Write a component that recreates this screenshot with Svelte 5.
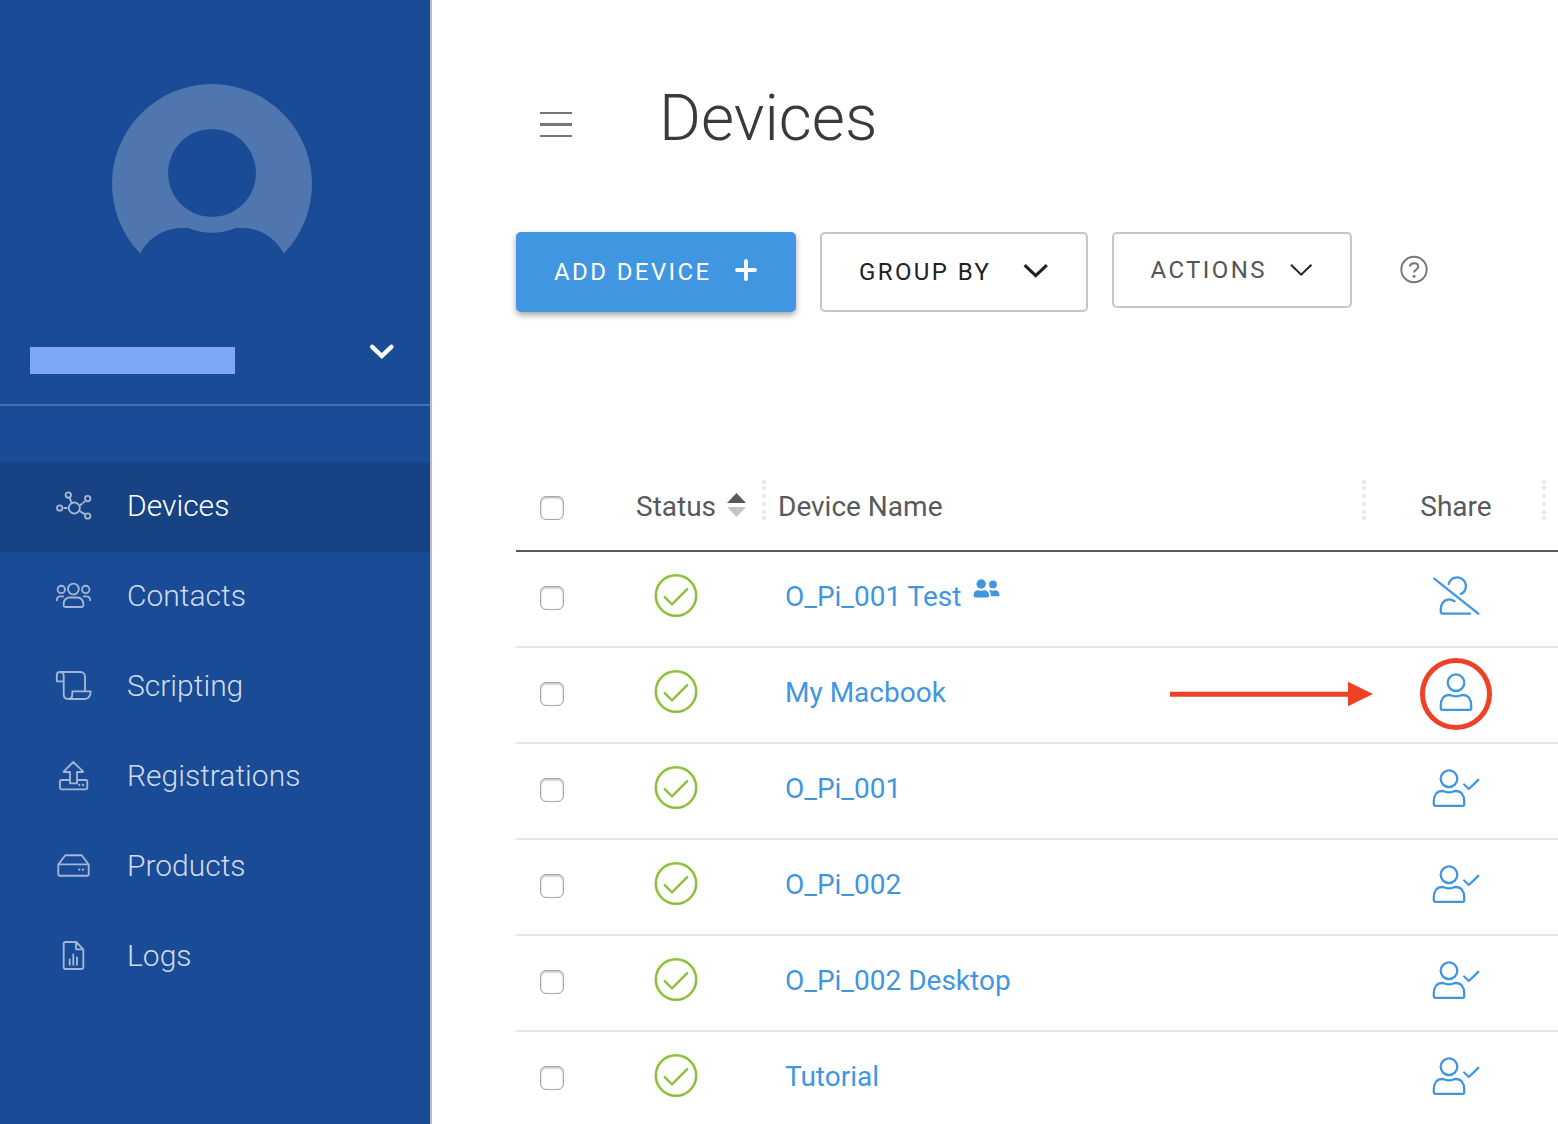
<script>
  const nav = [
    { id: 'devices', label: 'Devices', active: true },
    { id: 'contacts', label: 'Contacts' },
    { id: 'scripting', label: 'Scripting' },
    { id: 'registrations', label: 'Registrations' },
    { id: 'products', label: 'Products' },
    { id: 'logs', label: 'Logs' },
  ];
  const devices = [
    { name: 'O_Pi_001 Test', share: 'off', group: true },
    { name: 'My Macbook', share: 'none', marked: true },
    { name: 'O_Pi_001', share: 'shared' },
    { name: 'O_Pi_002', share: 'shared' },
    { name: 'O_Pi_002 Desktop', share: 'shared' },
    { name: 'Tutorial', share: 'shared' },
  ];
</script>

<div class="app">
  <aside class="sidebar">
    <div class="profile">
      <svg class="avatar" width="200" height="170" viewBox="0 0 200 170">
        <path fill-rule="evenodd" d="M28.200 169.600A100 100 0 1 1 171.800 169.600C163 153 147 144 130 144L124 144Q100 153.500 76 144L70 144C53 144 37 153 28.200 169.600ZM100 45a44 44 0 1 0 0 88a44 44 0 1 0 0-88Z" />
      </svg>
      <div class="account">
        <div class="masked"></div>
        <svg width="26" height="18" viewBox="0 0 26 18"><path class="bold-chevron" d="M4.200 4.800 13.800 14 23.400 4.800" /></svg>
      </div>
    </div>
    <nav>
      {#each nav as item}
        <div class="nav-item" class:active={item.active}>
          <svg class="nav-icon" width="36" height="36" viewBox="0 0 36 36">
            {#if item.id === 'devices'}
              <circle cx="12.300" cy="7" r="2.700" /><circle cx="31.700" cy="10.600" r="2.700" />
              <circle cx="3.700" cy="20" r="2.700" /><circle cx="31.700" cy="28" r="2.700" />
              <circle cx="18.300" cy="20" r="5.500" />
              <path d="M13.500 9.700 15.700 14.800M8.300 20h2.400M24.500 17l1.200-1M27.200 14.700l1-.8M23.200 22.700l5.900 3.700" />
            {:else if item.id === 'contacts'}
              <circle cx="5.300" cy="11.400" r="3.700" /><circle cx="17.400" cy="11" r="5.400" /><circle cx="29.700" cy="11.400" r="3.700" />
              <path d="M7.700 27.500V25.500a6 6 0 0 1 6-6h7.600a6 6 0 0 1 6 6v2a1.500 1.500 0 0 1-1.500 1.500H9.200a1.500 1.500 0 0 1-1.500-1.500ZM.8 22.300c0-2.600 1.500-3.900 3.800-3.900h2.600M34.200 22.300c0-2.600-1.500-3.900-3.800-3.900h-2.600" />
            {:else if item.id === 'scripting'}
              <path d="M4 4h20.500C27 4 29 6 29 8.500V23M4 4C2 4 .8 5.500.8 7.300v6h6.900M4 4c2.400 0 3.700 1.500 3.700 4v18c0 3 1.800 5 4.600 5h16.200c3.800 0 6-2.500 6.200-7.700H16.300V26c0 3-1.500 5-4 5" />
            {:else if item.id === 'registrations'}
              <path d="M17.300 4 27 13.300q.5.700-.4.700H21v11.300h-7V14H8.200q-1 0-.4-.7ZM14 22H5.500A1.500 1.500 0 0 0 4 23.500v6.300a1.500 1.500 0 0 0 1.500 1.500h24.300a1.500 1.500 0 0 0 1.500-1.500v-6.300a1.500 1.500 0 0 0-1.500-1.500H21" />
              <path class="dots" d="M23.300 27h.01M27 27h.01" />
            {:else if item.id === 'products'}
              <path d="M2.300 16.300h30.400v9.900a1.500 1.500 0 0 1-1.500 1.500H3.800a1.500 1.500 0 0 1-1.500-1.500ZM2.500 16.200 8.700 8q.6-.8 1.500-.8h14.600q.9 0 1.500.8l6.200 8.200" />
              <path class="dots" d="M23.300 21.700h.01M27 21.700h.01" />
            {:else}
              <path d="M20.300 4H9.200a1.500 1.500 0 0 0-1.500 1.500v24A1.500 1.500 0 0 0 9.200 31h16.600a1.500 1.500 0 0 0 1.500-1.500V11.300ZM20 4v7.300h7.300M13.700 21.300v5.400M17.300 16.300v10.400M21 19.300v7.400" />
            {/if}
          </svg>
          <span>{item.label}</span>
        </div>
      {/each}
    </nav>
  </aside>

  <main>
    <header>
      <div class="burger"><i></i><i></i><i></i></div>
      <h1>Devices</h1>
    </header>

    <div class="toolbar">
      <button class="primary">
        <span>ADD DEVICE</span>
        <svg width="22" height="22" viewBox="0 0 22 22"><path d="M11 2v18M2 11h18" /></svg>
      </button>
      <button class="group">
        <span>GROUP BY</span>
        <svg width="26" height="18" viewBox="0 0 26 18"><path d="M1.600 3.200 12.700 13.600 23.800 3.200" /></svg>
      </button>
      <button class="actions">
        <span>ACTIONS</span>
        <svg width="22" height="14" viewBox="0 0 22 14"><path d="M1 1.700 11.200 11.700 21.400 1.700" /></svg>
      </button>
      <svg class="help" width="28" height="28" viewBox="0 0 28 28">
        <circle cx="14" cy="13.500" r="12.700" />
        <path d="M9.700 10.500C10.300 8.100 12 7.200 14 7.200c2.500 0 4.300 1.300 4.300 3.400 0 3-4.300 3-4.300 6" />
        <circle class="point" cx="14" cy="20.300" r="1.500" />
      </svg>
    </div>

    <section class="table">
      <div class="row head">
        <div class="pick"><span class="box"></span></div>
        <div class="status">
          <span>Status</span>
          <svg width="19" height="24" viewBox="0 0 19 24"><path fill="#58595b" d="M0 10 9.500 0 19 10Z" /><path fill="#c4c4c4" d="M0 14h19L9.500 24Z" /></svg>
        </div>
        <div class="name">Device Name</div>
        <div class="share">Share</div>
        <div class="rest"></div>
      </div>
      {#each devices as device}
        <div class="row">
          <div class="pick"><span class="box"></span></div>
          <div class="status">
            <svg width="44" height="44" viewBox="0 0 44 44"><circle cx="22" cy="21.500" r="20.200" /><path d="M10.800 23.200 18 30.300 33.200 15.200" /></svg>
          </div>
          <div class="name">
            <span>{device.name}</span>
            {#if device.group}
              <svg class="people" width="27" height="20" viewBox="0 0 27 20">
                <circle cx="8.200" cy="5" r="4.700" /><circle cx="20" cy="5.400" r="3.900" />
                <path d="M.5 16.500C.5 13.300 2.300 11.300 5 11.300q3 1 6 0c3 0 5.200 2 5.200 5.200q0 2-1.700 2h-12.300q-1.700 0-1.700-2Z" />
                <path d="M16 11.600q1-.5 2-.3 2 .9 4 0c2.500 0 4.500 2 4.500 4.500 0 1-.5 1.500-1.400 1.500h-7.400q.5-3.700-1.700-5.700Z" />
              </svg>
            {/if}
            {#if device.marked}
              <svg class="arrow" width="204" height="26" viewBox="0 0 204 26"><path d="M0 9.700h178V-.3l25 12.300-25 12.300v-9.500H0Z" /></svg>
            {/if}
          </div>
          <div class="share">
            <svg width="48" height="40" viewBox="0 0 48 40">
              {#if device.share === 'off'}
                <path d="M2.200 2.700 46.300 37.700M16.700 8.100A8.700 8.700 0 1 1 29 17.900M22.500 25.200C20.500 24 18.500 23.300 16.500 23.500 12 23.900 8.800 27.800 8.800 33v2.800q0 1.900 1.900 1.900H37.900" />
              {:else}
                <g class:centered={device.share === 'none'}>
                  <circle cx="17" cy="10.700" r="8.300" />
                  <path d="M1.800 33.500C1.800 27 5 23 10.300 23q1.200 0 2.300.5 4.400 1.800 8.800 0 1.100-.5 2.300-.5C29 23 32.200 27 32.200 33.500v2.800q0 1.500-1.500 1.500H3.300q-1.500 0-1.500-1.500Z" />
                </g>
                {#if device.share === 'shared'}<path d="M32.200 16.500 36.800 21 46.300 11.800" />{/if}
              {/if}
            </svg>
            {#if device.marked}<span class="ring"></span>{/if}
          </div>
          <div class="rest"></div>
        </div>
      {/each}
    </section>
  </main>
</div>

<style>
  :global(body) { margin: 0; background: #fff; overflow: hidden; }
  .app { display: flex; width: 1558px; height: 1124px; overflow: hidden; font-family: Roboto, sans-serif; }
  svg { display: block; flex: none; overflow: visible; }
  .sidebar { box-sizing: border-box; width: 432px; flex: none; background: #1a4b96; border-right: 2px solid #bdbdc1; }
  .profile { box-sizing: border-box; height: 406px; padding-top: 84px; border-bottom: 2px solid #476fab; }
  .avatar { margin-left: 112px; fill: #5076af; }
  .account { display: flex; justify-content: space-between; padding: 88px 36px 0 30px; }
  .masked { width: 205px; height: 27px; margin-top: 5px; background: #7ea7f8; }
  .bold-chevron { fill: none; stroke: #fff; stroke-width: 4.400; stroke-linecap: round; }
  nav { padding-top: 56px; }
  .nav-item { box-sizing: border-box; display: flex; align-items: center; height: 90px; padding: 0 0 2px 56px; gap: 35px; color: #d1dbea; font-size: 30px; font-weight: 300; }
  .nav-item span { margin-top: -2px; }
  .nav-item.active { background: #174384; color: #fff; }
  .nav-icon { fill: none; stroke: #a3b7d5; stroke-width: 1.850; stroke-linecap: round; stroke-linejoin: round; }
  .nav-icon .dots { stroke-width: 2.300; }

  main { flex: 1; min-width: 0; padding-left: 84px; }
  header { display: flex; height: 232px; padding-left: 24px; box-sizing: border-box; }
  .burger { display: flex; flex-direction: column; gap: 9px; width: 32px; margin: 112px 87px 0 0; }
  .burger i { height: 2.300px; background: #777; }
  h1 { margin: 81px 0 0; color: #3a3a3a; font-size: 64px; line-height: 76px; font-weight: 300; }
  .toolbar { display: flex; align-items: flex-start; height: 228px; gap: 24px; }
  button { box-sizing: border-box; display: flex; align-items: center; height: 80px; padding: 0; font: 400 24px/28px Roboto, sans-serif; letter-spacing: 2.400px; white-space: nowrap; border: 2px solid #c6c6c6; border-radius: 5px; background: #fff; }
  button svg { fill: none; stroke: #212121; }
  .primary { width: 280px; padding: 0 37px 0 36px; justify-content: space-between; color: #fff; background: #4096e1; border-color: #4096e1; box-shadow: 0 3px 6px rgba(0, 0, 0, .36); }
  .primary svg { stroke: #fff; stroke-width: 3.800; stroke-linecap: round; margin-top: -5px; }
  .group { width: 268px; padding: 0 37px 0 37px; justify-content: space-between; color: #212121; }
  .group svg { stroke-width: 3.200; margin-top: -3px; }
  .actions { width: 240px; height: 76px; padding: 0 38px 0 36.500px; justify-content: space-between; color: #555; }
  .actions svg { stroke-width: 2; }
  .help { margin: 24px 0 0 24px; fill: none; stroke: #777; stroke-width: 1.900; }
  .help .point { fill: #777; stroke: none; }

  .row { box-sizing: border-box; display: grid; grid-template-columns: 96px 152px 600px 180px 14px; height: 96px; border-bottom: 2px solid #e6e6e6; font-size: 28px; line-height: 34px; color: #4096e1; }
  .row > div { display: flex; align-items: center; }
  .head { height: 92px; border-color: #58595b; color: #58595b; }
  .pick { padding-left: 24px; }
  .row .pick { align-items: flex-start; padding-top: 34px; }
  .head .pick { padding-top: 36px; }
  .box { box-sizing: border-box; width: 24px; height: 24px; border: 1px solid #a9a9a9; border-radius: 6px; box-shadow: inset 0 1.500px 2px rgba(0, 0, 0, .22), inset 0 0 1px rgba(0, 0, 0, .3); }
  .row .status { padding: 0 0 7px 42px; }
  .status svg { fill: none; stroke: #8dc03d; stroke-width: 2.500; stroke-linecap: round; }
  .head .status { padding: 4px 0 0 24px; gap: 11px; }
  .head .status svg { stroke: none; margin-top: -4px; }
  .row .name { padding: 0 0 4px 21px; }
  .head .name { padding: 4px 0 0 16px; }
  .people { fill: #4096e1; margin: -17px 0 0 12px; }
  .arrow { margin: 3px -10px 0 auto; fill: #ee4126; }
  .row .share { position: relative; padding: 6px 0 12px 4px; box-sizing: border-box; justify-content: center; }
  .head .share { padding: 4px 0 0 6px; }
  .share svg { fill: none; stroke: #4096e1; stroke-width: 2.300; stroke-linecap: round; stroke-linejoin: round; }
  .centered { transform: translateX(7px); }
  .ring { position: absolute; box-sizing: border-box; left: 55.500px; top: 10px; width: 72px; height: 71.500px; border: 5px solid #ee4126; border-radius: 50%; }
  /* Dotted column separators */
  .head .name, .head .share, .head .rest { background: linear-gradient(#ebebeb 0 4px, transparent 4px 6px, #ebebeb 6px 10px, transparent 10px 14px, #ebebeb 14px 18px, transparent 18px 22px, #ebebeb 22px 26px, transparent 26px 30px, #ebebeb 30px 34px, transparent 34px 36px, #ebebeb 36px 40px) 0 20px / 4px 40px no-repeat; margin-left: -2px; }
</style>
